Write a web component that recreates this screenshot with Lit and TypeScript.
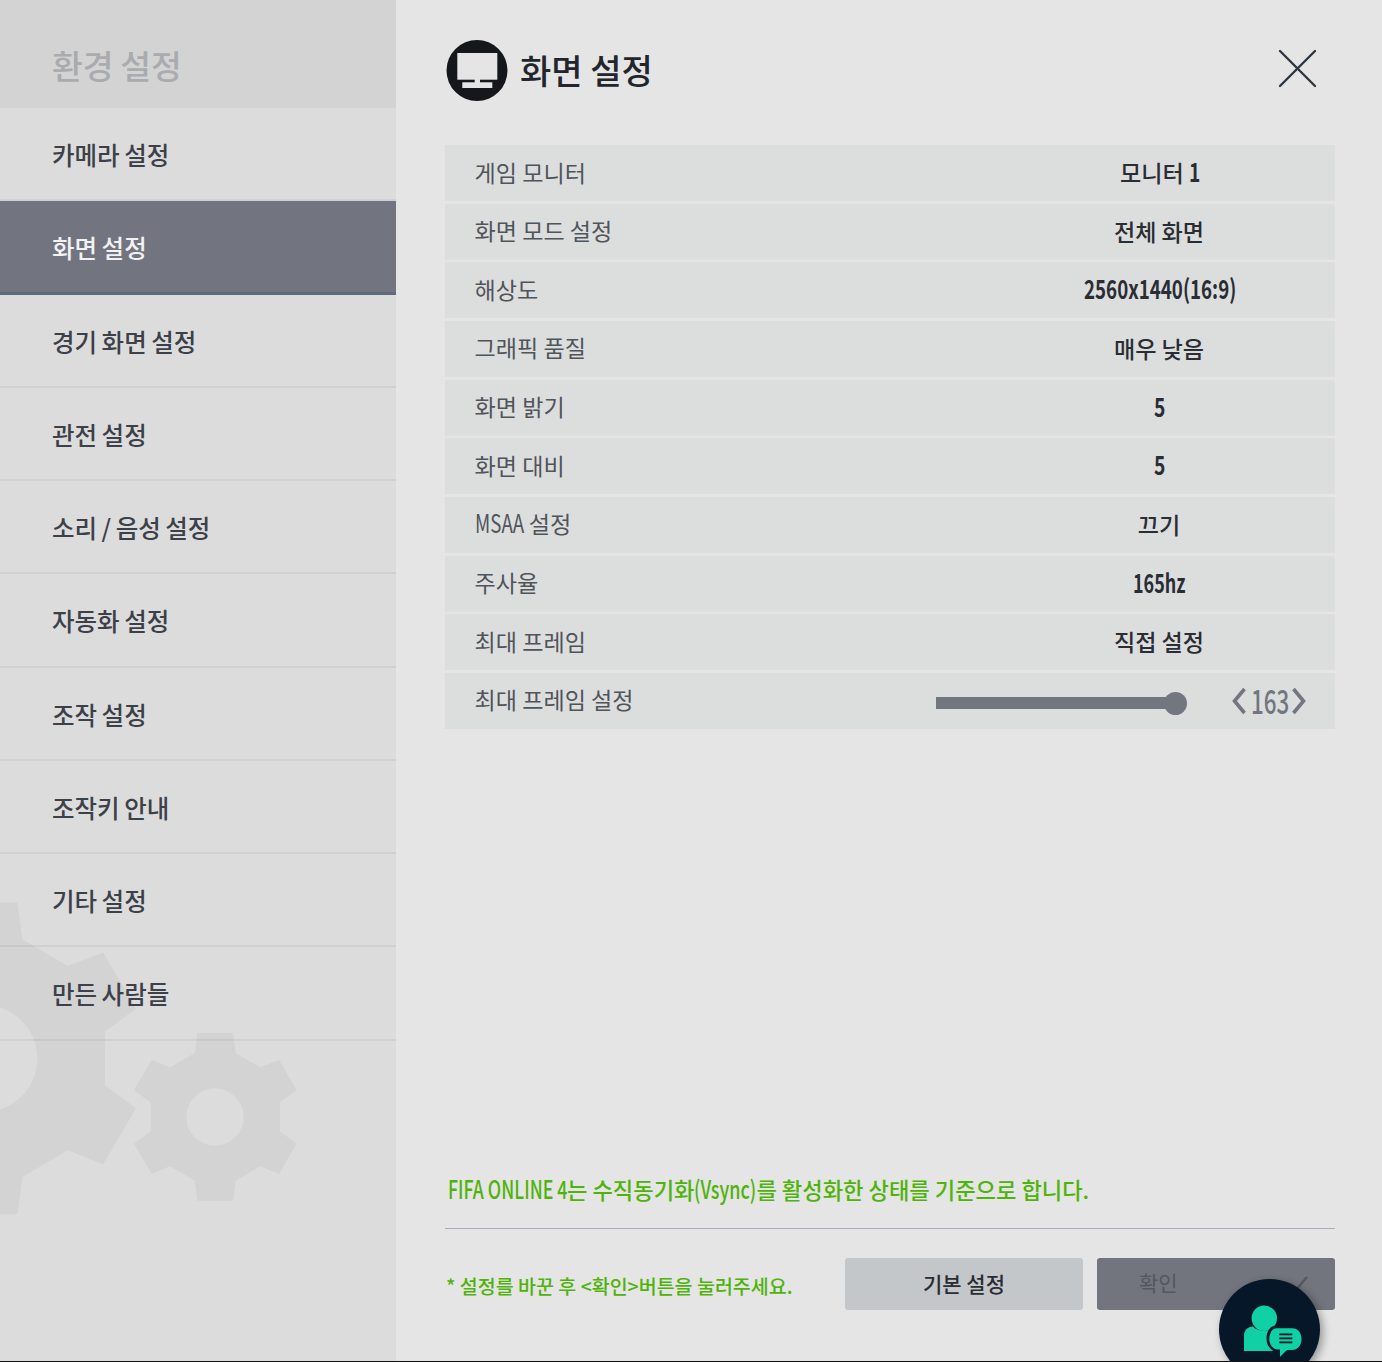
import { LitElement, html, css, svg } from "lit";
import { customElement } from "lit/decorators.js";

/** Condensed Latin run: no narrow family is installed, so a measured width holds a horizontally squeezed glyph run. */
const c = (text: string, size: number, scale: number, width: number) =>
  html`<span class="cond" style="width:${width}px"><span class="squeeze" style="font-size:${size}px;transform:scaleX(${scale})">${text}</span></span>`;

const MENU = ["카메라 설정", "화면 설정", "경기 화면 설정", "관전 설정", "소리 / 음성 설정", "자동화 설정", "조작 설정", "조작키 안내", "기타 설정", "만든 사람들"];
const ROWS: [unknown, unknown][] = [
  ["게임 모니터", html`모니터 ${c("1", 26, 0.74, 9)}`],
  ["화면 모드 설정", "전체 화면"],
  ["해상도", c("2560x1440(16:9)", 26, 0.72, 150)],
  ["그래픽 품질", "매우 낮음"],
  ["화면 밝기", c("5", 26, 0.74, 11)],
  ["화면 대비", c("5", 26, 0.74, 11)],
  [html`${c("MSAA", 25, 0.75, 49)} 설정`, "끄기"],
  ["주사율", c("165hz", 26, 0.69, 52)],
  ["최대 프레임", "직접 설정"],
];
const GEAR =
  "M-53 -252L54 -252L62 -192L135 -149L192 -171L245 -80L195 -44L195 43L245 80L192 171L135 148L62 191L54 251L-53 251L-60 191L-135 148L-190 171L-243 80L-193 43L-193 -44L-243 -80L-190 -171L-135 -149L-60 -192Z M86 0A86 86 0 1 0 -86 0A86 86 0 1 0 86 0Z";
const gear = (cls: string) => html`<svg class="gear ${cls}" viewBox="-245 -252 490 504">${svg`<path d=${GEAR} fill-rule="evenodd" />`}</svg>`;

@customElement("app-root")
export class AppRoot extends LitElement {
  static styles = css`
    :host {
      display: block;
      width: 1382px;
      height: 1362px;
      overflow: hidden;
      position: relative;
      font-family: "Noto Sans CJK KR", sans-serif;
      border-bottom: 1px solid #111;
      box-sizing: border-box;
    }
    .cond {
      display: inline-block;
      white-space: nowrap;
      line-height: 1;
    }
    .squeeze {
      display: inline-block;
      transform-origin: 0 50%;
    }
    .page {
      display: grid;
      grid-template-columns: 396px 1fr;
      height: 1361px;
      background: #e5e5e5;
    }
    .side {
      position: relative;
      background: #dcdcdc;
      overflow: hidden;
    }
    .gear {
      position: absolute;
      fill: #d3d3d3;
    }
    .gear.big {
      left: -168px;
      top: 902px;
      width: 304px;
      height: 313px;
    }
    .gear.small {
      left: 133px;
      top: 1033px;
      width: 164px;
      height: 168px;
    }
    .side h1 {
      position: relative;
      margin: 0;
      height: 108px;
      box-sizing: border-box;
      padding: 20px 0 0 52px;
      display: flex;
      align-items: center;
      background: #d3d3d3;
      color: #a9abae;
      font-size: 33.5px;
      font-weight: 500;
      word-spacing: -1px;
    }
    .item {
      position: relative;
      height: 93.25px;
      box-sizing: border-box;
      display: flex;
      align-items: center;
      padding: 2px 0 0 52px;
      font-size: 24.5px;
      font-weight: 500;
      word-spacing: -1px;
      color: #3c4048;
      border-bottom: 2px solid rgba(0, 0, 0, 0.05);
    }
    .item.on {
      background: #72757f;
      color: #f2f2f2;
      border-bottom: 3px solid #5f6a7b;
    }
    .main {
      display: flex;
      flex-direction: column;
      padding: 40px 47px 0 49px;
      min-width: 0;
    }
    .head {
      display: flex;
      align-items: center;
      height: 61px;
      margin-bottom: 44px;
      gap: 12px;
      padding-left: 1px;
    }
    .head h2 {
      margin: 0;
      flex: 1;
      padding-bottom: 2px;
      font-size: 34px;
      font-weight: 500;
      color: #22252c;
    }
    .tv {
      width: 62px;
      height: 62px;
    }
    .x {
      width: 40px;
      height: 40px;
      margin: -6px 17px 0 0;
    }
    .table {
      display: grid;
      grid-auto-rows: 56px;
      row-gap: 2.67px;
    }
    .row {
      display: grid;
      grid-template-columns: 1fr 352px;
      align-items: center;
      padding-left: 29.5px;
      background: #dcdedd;
      font-size: 23.1px;
      color: #50545b;
    }
    .label {
      padding-bottom: 3px;
    }
    .val {
      padding-bottom: 2px;
      text-align: center;
      color: #2a2d34;
      font-weight: 500;
    }
    .val .cond {
      font-weight: 700;
    }
    .row.last {
      grid-template-columns: 1fr auto;
    }
    .ctrl {
      display: flex;
      align-items: center;
      padding-right: 29px;
    }
    .slider {
      position: relative;
      width: 251px;
      height: 12px;
      margin-top: 5px;
    }
    .track {
      height: 12px;
      width: 240px;
      background: #72767f;
    }
    .knob {
      position: absolute;
      right: 0;
      top: -5.5px;
      width: 23px;
      height: 23px;
      border-radius: 50%;
      background: #72767f;
    }
    .stepper {
      display: flex;
      align-items: center;
      justify-content: space-between;
      width: 74px;
      margin-left: 45px;
      color: #72767f;
      font-weight: 500;
    }
    .chev {
      width: 14px;
      height: 28px;
    }
    .spacer {
      flex: 1;
    }
    .note {
      color: #4eb30a;
      font-size: 22.2px;
      line-height: 34px;
      height: 34px;
      font-weight: 500;
      padding-left: 3px;
      white-space: nowrap;
      margin-bottom: 1px;
    }
    .main .rule {
      margin-top: 21px;
      height: 1px;
      background: #a9aeb8;
    }
    .foot {
      display: flex;
      align-items: center;
      gap: 14px;
      margin: 29px 0 51px;
    }
    .foot .hint {
      flex: 1;
      color: #4eb30a;
      font-size: 19.5px;
      font-weight: 500;
      padding: 2px 0 0 1px;
    }
    .btn {
      position: relative;
      width: 238px;
      height: 52px;
      box-sizing: border-box;
      border-radius: 3px;
      display: flex;
      align-items: center;
      justify-content: center;
      padding-bottom: 2px;
      font-size: 21px;
      font-weight: 500;
      background: #c3c7c9;
      color: #2a2d34;
    }
    .btn.ok {
      background: #72757d;
      color: #54575e;
      justify-content: flex-start;
      padding-left: 42px;
      padding-bottom: 4px;
      font-weight: 400;
    }
    .check {
      position: absolute;
      right: 26px;
      top: 17px;
      width: 20px;
      height: 18px;
    }
    .chat {
      position: absolute;
      left: 1219px;
      top: 1279px;
      width: 101px;
      height: 101px;
      border-radius: 50%;
      background: #07172a;
      box-shadow: 3px 3px 8px rgba(0, 0, 0, 0.35);
    }
    .chat svg {
      width: 101px;
      height: 101px;
      display: block;
    }
  `;

  render() {
    return html`
      <div class="page">
        <aside class="side">
          ${gear("big")} ${gear("small")}
          <h1>환경 설정</h1>
          ${MENU.map((m, i) => html`<div class="item ${i === 1 ? "on" : ""}">${m}</div>`)}
        </aside>
        <main class="main">
          <header class="head">
            <svg class="tv" viewBox="0 0 62 62">
              <circle cx="31" cy="30.5" r="30.5" fill="#15171a" />
              <rect x="11.3" y="13" width="40" height="26.7" fill="#e5e5e5" />
              <rect x="28.7" y="39" width="5.3" height="4" fill="#e5e5e5" />
              <rect x="16.3" y="42.3" width="30" height="5.7" fill="#e5e5e5" />
            </svg>
            <h2>화면 설정</h2>
            <svg class="x" viewBox="0 0 40 40">
              <path d="M2 3L37 38M37 3L2 38" stroke="#2f3742" stroke-width="2.4" stroke-linecap="round" fill="none" />
            </svg>
          </header>
          <section class="table">
            ${ROWS.map(([k, v]) => html`<div class="row"><span class="label">${k}</span><span class="val">${v}</span></div>`)}
            <div class="row last">
              <span class="label">최대 프레임 설정</span>
              <div class="ctrl">
                <div class="slider"><div class="track"></div><div class="knob"></div></div>
                <div class="stepper">
                  <svg class="chev" viewBox="0 0 14 28"><path d="M12.5 2L2.5 14L12.5 26" fill="none" stroke="#72767f" stroke-width="3.6" /></svg>
                  ${c("163", 33, 0.68, 36)}
                  <svg class="chev" viewBox="0 0 14 28"><path d="M1.5 2L11.5 14L1.5 26" fill="none" stroke="#72767f" stroke-width="3.6" /></svg>
                </div>
              </div>
            </div>
          </section>
          <div class="spacer"></div>
          <div class="note">${c("FIFA ONLINE 4", 25, 0.71, 119)}는 수직동기화${c("(Vsync)", 25, 0.72, 62)}를 활성화한 상태를 기준으로 합니다.</div>
          <div class="rule"></div>
          <div class="foot">
            <div class="hint">* 설정를 바꾼 후 &lt;확인&gt;버튼을 눌러주세요.</div>
            <div class="btn">기본 설정</div>
            <div class="btn ok">
              확인
              <svg class="check" viewBox="0 0 20 18"><path d="M1 9L7 15L18 2" fill="none" stroke="#54575e" stroke-width="2.4" /></svg>
            </div>
          </div>
        </main>
      </div>
      <div class="chat">
        <svg viewBox="0 0 101 101">
          <circle cx="45.3" cy="39.3" r="12.7" fill="#0fd1a5" />
          <path d="M25 72V57C25 51 29 47.5 34 47.5C38 53 52 53 56 47.5C61 47.5 65 51 65 57V72Z" fill="#0fd1a5" />
          <path d="M58 46.5H74C81 46.5 85 52 85 60C85 68 81 74 74 74H69L59 83V73.5C52 72 47.5 67 47.5 60C47.5 52 51 46.5 58 46.5Z" fill="#07172a" />
          <path d="M58 49.3H73C79 49.3 82.5 54 82.5 60C82.5 66 79 71 73 71H68L61 77.7V70.5H59C54 70.5 50.3 66 50.3 60C50.3 54 53 49.3 58 49.3Z" fill="#0fd1a5" />
          <path d="M60.3 55.3H73.3M60.3 59.3H73.3M60.3 63.3H73.3" stroke="#07172a" stroke-width="1.8" />
        </svg>
      </div>
    `;
  }
}
